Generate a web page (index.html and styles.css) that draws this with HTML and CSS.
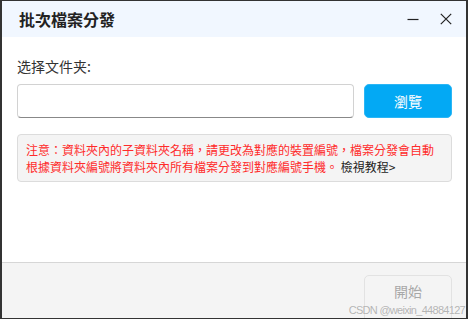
FILE: index.html
```html
<!DOCTYPE html>
<html lang="zh-Hant">
<head>
    <meta charset="UTF-8">
    <meta name="viewport" content="width=device-width, initial-scale=1.0">
    <title>批次檔案分發</title>
    <link rel="stylesheet" href="styles.css">
</head>
<body>
    <div class="window">
        <div class="titlebar">
            <h1 class="title">批次檔案分發</h1>
            <div class="controls">
                <span class="ctrl">
                    <svg width="12" height="12" viewBox="0 0 12 12"><path d="M0.5 6.5h11" stroke="#222" stroke-width="1.2"/></svg>
                </span>
                <span class="ctrl">
                    <svg width="12" height="12" viewBox="0 0 12 12"><path d="M0.8 0.8l10.4 10.4M11.2 0.8L0.8 11.2" stroke="#222" stroke-width="1.2"/></svg>
                </span>
            </div>
        </div>

        <div class="content">
            <label class="label">选择文件夹:</label>
            <div class="picker">
                <input class="path-input" type="text">
                <button class="btn-browse">瀏覽</button>
            </div>
            <div class="notice">
                <p class="notice-line">注意：資料夾內的子資料夾名稱，請更改為對應的裝置編號，檔案分發會自動</p>
                <p class="notice-line">根據資料夾編號將資料夾內所有檔案分發到對應編號手機。 <a class="tutorial">檢視教程&gt;</a></p>
            </div>
        </div>

        <div class="footer">
            <button class="btn-start" disabled>開始</button>
        </div>
        <span class="watermark">CSDN @weixin_44884127</span>
    </div>
</body>
</html>
```

FILE: styles.css
```css
body {
    margin: 0;
    padding: 0;
    background: #fff;
    font-family: "Noto Sans CJK SC", "Noto Sans CJK TC", sans-serif;
    color: #333;
}
.window {
    position: relative;
    box-sizing: border-box;
    width: 468px;
    height: 319px;
    border-top: 1px solid #333;
    border-left: 2px solid #333;
    border-right: 2px solid #333;
    border-bottom: 1px solid #333;
    display: flex;
    flex-direction: column;
    overflow: hidden;
}
.titlebar {
    height: 36px;
    flex-shrink: 0;
    background: #f1f7ff;
    display: flex;
    align-items: center;
    justify-content: space-between;
    padding: 0 14px 0 17px;
}
.title {
    margin: 0;
    font-size: 16px;
    font-weight: bold;
    color: #222;
    line-height: 20px;
}
.controls {
    display: flex;
    gap: 21px;
    align-items: center;
}
.ctrl {
    width: 12px;
    height: 12px;
    display: flex;
}
.content {
    flex: 1;
    padding: 19px 14px 0 15px;
}
.label {
    display: block;
    font-size: 14px;
    line-height: 20px;
    color: #333;
}
.picker {
    display: flex;
    gap: 10px;
    margin-top: 8px;
}
.path-input {
    flex: 1;
    box-sizing: border-box;
    height: 34px;
    border: 1px solid #d2d2d2;
    border-bottom-color: #888;
    border-radius: 4px;
    outline: none;
}
.btn-browse {
    width: 88px;
    height: 34px;
    border: 1px solid #2bb6f5;
    border-radius: 5px;
    background: #03a9f4;
    color: #fff;
    font-family: inherit;
    font-size: 14px;
    padding: 0;
}
.notice {
    margin-top: 16px;
    box-sizing: border-box;
    height: 48px;
    padding: 7px 0 0 8px;
    background: #f4f4f4;
    border: 1px solid #dcdcdc;
    border-radius: 4px;
    color: #ff2b2b;
    font-size: 12px;
    line-height: 16.5px;
}
.notice-line {
    margin: 0;
    white-space: nowrap;
}
.tutorial {
    color: #222;
}
.footer {
    box-sizing: border-box;
    height: 56px;
    flex-shrink: 0;
    background: #f4f4f4;
    border-top: 1px solid #d6d6d6;
    display: flex;
    justify-content: flex-end;
    padding: 12px 14px 0 0;
}
.btn-start {
    width: 88px;
    height: 50px;
    flex-shrink: 0;
    border: 1px solid #e2e2e2;
    border-radius: 5px;
    background: #f4f4f4;
    color: #a8a8a8;
    font-family: inherit;
    font-size: 14px;
    padding: 0;
    line-height: 30px;
    display: flex;
    justify-content: center;
    align-items: flex-start;
}
.watermark {
    position: absolute;
    right: 1px;
    bottom: 2px;
    font-family: "Liberation Sans", sans-serif;
    font-size: 11px;
    letter-spacing: -0.7px;
    color: #b4b4b4;
    text-shadow: 0 0 1px #fff;
}
```
